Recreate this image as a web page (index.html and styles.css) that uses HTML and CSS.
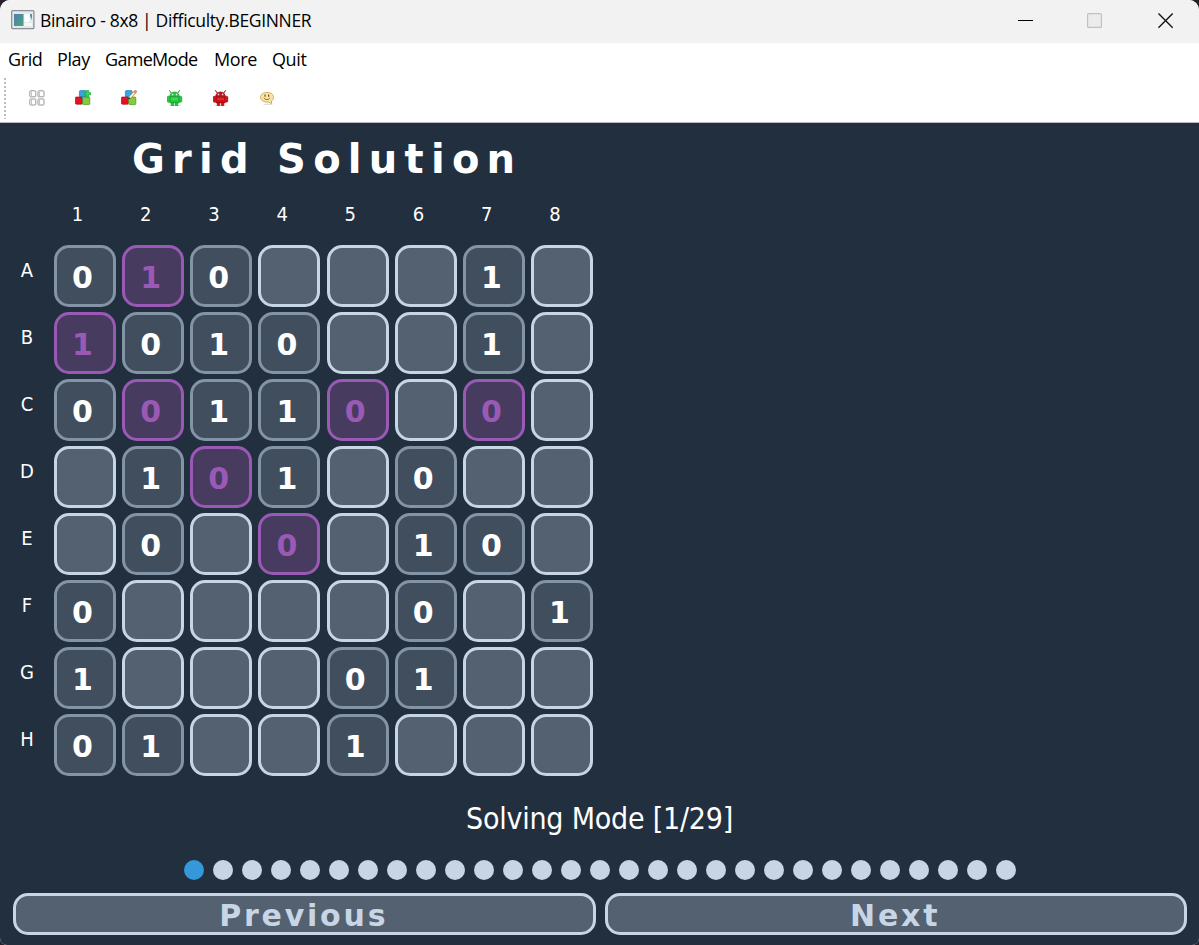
FILE: index.html
```
<!DOCTYPE html>
<html lang="en">
<head>
<meta charset="utf-8">
<title>Binairo</title>
<link rel="stylesheet" href="styles.css">
</head>
<body>
<div class="window">
<header class="titlebar">
<svg class="app-icon" width="24" height="20" viewBox="0 0 24 20"><defs><linearGradient id="scr" x2="1" y2="1"><stop stop-color="#4c7fae"/><stop offset="1" stop-color="#4ba67a"/></linearGradient></defs><rect x=".7" y=".7" width="22.2" height="18" rx="1" fill="#e6e9ec" stroke="#8c9096" stroke-width="1.3"/><rect x="3" y="4" width="9.5" height="12" fill="url(#scr)"/><path d="M13.500 4h5v8h-5z" fill="#fff"/><path d="M19 4h2v6l-2-4z" fill="#4e91aa"/><path d="M13.500 13h7.500v3h-7.500z" fill="#f6f7f8"/></svg>
<span class="caption">Binairo - 8x8 | Difficulty.BEGINNER</span>
<div class="controls">
<svg width="16" height="16" viewBox="0 0 16 16"><path d="M0 7.500h15" stroke="#000"/></svg>
<svg width="16" height="16" viewBox="0 0 16 16"><rect x=".6" y=".6" width="13.8" height="13.8" rx="1" fill="#ececec" stroke="#c0c0c0" stroke-width="1.2"/></svg>
<svg width="16" height="16" viewBox="0 0 16 16"><path d="M.5.5l14.2 14.2M14.7.5L.5 14.7" stroke="#16161c" stroke-width="1.4"/></svg>
</div>
</header>
<nav class="menu"><span class="m1">Grid</span><span class="m2">Play</span><span class="m3">GameMode</span><span class="m4">More</span><span class="m5">Quit</span></nav>
<div class="toolbar">
<svg class="grip" width="2" height="42" viewBox="0 0 2 42"><path d="M1 1v41" stroke="#bdbdbd" stroke-width="2" stroke-dasharray="2 2"/></svg>
<svg width="16" height="16" viewBox="0 0 16 16"><g fill="#fff" stroke="#999"><rect x=".8" y=".8" width="6" height="6" rx=".8"/><rect x="9" y=".8" width="6" height="6" rx=".8"/><rect x=".8" y="9" width="6" height="6" rx=".8"/><rect x="9" y="9" width="6" height="6" rx=".8"/></g><path d="M2.500 1.500v5M10.500 1.500v5M2.500 9.500v5M10.500 9.500v5" stroke="#c4c4c4"/></svg>
<svg width="16" height="16" viewBox="0 0 16 16"><rect x="4.400" y=".6" width="6.800" height="6.400" rx="1" fill="#35a5e6" stroke="#247db5" stroke-width=".7"/><rect x=".4" y="7" width="7" height="7.200" rx="1" fill="#e31224" stroke="#a80d1b" stroke-width=".7"/><rect x="7.600" y="7" width="7.200" height="7.600" rx="1" fill="#82cb3c" stroke="#4e8b20" stroke-width=".7"/><path d="M11.700.5h2v2.200h2.200v2h-2.200V6.900h-2V4.700H9.500v-2h2.200z" fill="#35e05a" stroke="#14a83a" stroke-width=".7"/></svg>
<svg width="16" height="16" viewBox="0 0 16 16"><rect x="4.400" y=".6" width="6.800" height="6.400" rx="1" fill="#35a5e6" stroke="#247db5" stroke-width=".7"/><rect x=".4" y="7" width="7" height="7.200" rx="1" fill="#e31224" stroke="#a80d1b" stroke-width=".7"/><rect x="7.600" y="7" width="7.200" height="7.600" rx="1" fill="#82cb3c" stroke="#4e8b20" stroke-width=".7"/><path d="M8.500 8L14.500 1.500" stroke="#b58a3c" stroke-width="2.800"/><path d="M8.800 7.700L13.600 2.400" stroke="#fff0b8" stroke-width="1.800"/><path d="M13.300 2.800L15.400.4" stroke="#e8827c" stroke-width="2.600"/><path d="M7.300 9.400l.5-2.200 1.700 1.400z" fill="#222"/></svg>
<svg width="16" height="16" viewBox="0 0 16 16"><ellipse cx="7.500" cy="15.200" rx="6" ry=".8" fill="#ccc"/><g stroke="#129428" stroke-width=".6" fill="#25c942"><path d="M2.700 6.600C2.700.4 12.300.4 12.300 6.600z"/><path d="M2.800 6.600h9.400v6.300H2.800z"/><rect x=".2" y="6.200" width="2.500" height="6" rx="1.200"/><rect x="12.300" y="6.200" width="2.500" height="6" rx="1.200"/><path d="M4.300 12.700h2.300v3H4.300zM8.400 12.700h2.300v3H8.400z"/></g><path d="M4.300 3L2.300.3M10.700 3L12.700.3" stroke="#129428"/><path d="M4.800 4.500h1.400M8.900 4.500h1.400" stroke="#eaffea" stroke-width="1.300"/><path d="M4 9h7" stroke="#62e078"/></svg>
<svg width="16" height="16" viewBox="0 0 16 16"><ellipse cx="7.500" cy="15.200" rx="6" ry=".8" fill="#ccc"/><g stroke="#870a10" stroke-width=".6" fill="#d50f18"><path d="M2.700 6.600C2.700.4 12.300.4 12.300 6.600z"/><path d="M2.800 6.600h9.400v6.300H2.800z"/><rect x=".2" y="6.200" width="2.500" height="6" rx="1.200"/><rect x="12.300" y="6.200" width="2.500" height="6" rx="1.200"/><path d="M4.300 12.700h2.300v3H4.300zM8.400 12.700h2.300v3H8.400z"/></g><path d="M4.300 3L2.300.3M10.700 3L12.700.3" stroke="#700b10"/><path d="M4.800 4.500h1.400M8.900 4.500h1.400" stroke="#ffe0e0" stroke-width="1.300"/><path d="M4 9h7" stroke="#ee3e40"/></svg>
<svg width="16" height="16" viewBox="0 0 16 16"><ellipse cx="9" cy="14.300" rx="5" ry=".8" fill="#ddd"/><path d="M8 2.400c3.800 0 6.500 2 6.500 4.900 0 1.800-.9 3-2.200 3.800l.4 2.500-3-1.600C5 12.500 1.500 10.400 1.500 7.300 1.500 4.400 4.200 2.400 8 2.400z" fill="#f8e5a4" stroke="#c9a359" stroke-width=".9"/><path d="M6 4.500v2.200M9.600 4.500v2.200" stroke="#735421" stroke-width="1.200"/><path d="M4.800 7.900c1.500 2.200 4.800 2.200 6.300 0" fill="none" stroke="#8c6829"/></svg>
</div>
<main class="game">
<h1 class="title">Grid Solution</h1>
<div class="columns"><span>1</span><span>2</span><span>3</span><span>4</span><span>5</span><span>6</span><span>7</span><span>8</span></div>
<div class="board">
<div class="rows"><span>A</span><span>B</span><span>C</span><span>D</span><span>E</span><span>F</span><span>G</span><span>H</span></div>
<div class="cells">
<i class="given">0</i><i class="solved">1</i><i class="given">0</i><i></i><i></i><i></i><i class="given">1</i><i></i>
<i class="solved">1</i><i class="given">0</i><i class="given">1</i><i class="given">0</i><i></i><i></i><i class="given">1</i><i></i>
<i class="given">0</i><i class="solved">0</i><i class="given">1</i><i class="given">1</i><i class="solved">0</i><i></i><i class="solved">0</i><i></i>
<i></i><i class="given">1</i><i class="solved">0</i><i class="given">1</i><i></i><i class="given">0</i><i></i><i></i>
<i></i><i class="given">0</i><i></i><i class="solved">0</i><i></i><i class="given">1</i><i class="given">0</i><i></i>
<i class="given">0</i><i></i><i></i><i></i><i></i><i class="given">0</i><i></i><i class="given">1</i>
<i class="given">1</i><i></i><i></i><i></i><i class="given">0</i><i class="given">1</i><i></i><i></i>
<i class="given">0</i><i class="given">1</i><i></i><i></i><i class="given">1</i><i></i><i></i><i></i>
</div>
</div>
<p class="mode">Solving Mode [1/29]</p>
<div class="dots"><b class="current"></b><b></b><b></b><b></b><b></b><b></b><b></b><b></b><b></b><b></b><b></b><b></b><b></b><b></b><b></b><b></b><b></b><b></b><b></b><b></b><b></b><b></b><b></b><b></b><b></b><b></b><b></b><b></b><b></b></div>
<div class="buttons"><button class="prev">Previous</button><button class="next">Next</button></div>
</main>
</div>
</body>
</html>
```
FILE: styles.css
```
* { box-sizing: border-box; }
body { margin: 0; background: #262029; overflow: hidden; }
.window { width: 1199px; height: 945px; display: flex; flex-direction: column; border-radius: 10px 10px 7px 7px; overflow: hidden; background: #fff; color: #000; font-family: "Open Sans", "Noto Sans", sans-serif; }
.titlebar { height: 43px; flex: none; background: #f2f2f2; display: flex; align-items: center; padding: 0 25px 3px 11px; }
.caption { margin-left: 5px; font-size: 17.5px; letter-spacing: -.33px; white-space: nowrap; }
.controls { margin-left: auto; width: 156px; padding-top: 2px; display: grid; grid-template-columns: 69px 71px 16px; }
.controls svg { display: block; }
.menu { height: 34px; flex: none; display: flex; padding-left: 8px; font-size: 18px; line-height: 33px; letter-spacing: -.4px; white-space: nowrap; }
.m1 { width: 49px; }
.m2 { width: 48px; }
.m3 { width: 109px; letter-spacing: -.7px; }
.m4 { width: 58px; }
.toolbar { height: 46px; flex: none; display: flex; align-items: center; gap: 30px; padding: 0 0 3px 4px; border-bottom: 1px solid #b5b9bb; }
.grip { margin-right: -7px; }
.game { flex: 1; background: #222f3f; color: #fff; font-family: "DejaVu Sans Condensed", "DejaVu Sans", sans-serif; font-stretch: condensed; }
.title { margin: 0; padding: 12px 0 0 132px; height: 72px; font-family: "DejaVu Sans", sans-serif; font-stretch: normal; font-size: 40px; line-height: 48px; font-weight: bold; letter-spacing: 7.25px; white-space: nowrap; }
.columns { display: grid; grid-template-columns: repeat(8, 68.200px); padding-left: 43.5px; height: 50px; font-size: 20px; line-height: 38px; text-align: center; }
.board { display: flex; }
.rows { width: 54px; display: grid; grid-auto-rows: 67px; font-size: 20px; line-height: 50px; text-align: center; }
.cells { width: 539px; display: grid; grid-template-columns: repeat(8, 62px); grid-auto-rows: 62px; justify-content: space-between; row-gap: 5px; }
.cells i { border: 3px solid #c8d5e5; border-radius: 15px; background: #536170; padding: 1px 5px 0 0; font-family: "DejaVu Sans", sans-serif; font-stretch: normal; font-style: normal; font-weight: bold; font-size: 30px; line-height: 58px; text-align: center; }
.cells .given { border-color: #8294a6; background: #404e5e; }
.cells .solved { border-color: #9b59b6; background: #473c60; color: #9b59b6; }
.mode { margin: 0; padding-top: 20px; height: 79px; font-size: 30px; line-height: 36px; text-align: center; letter-spacing: -.22px; }
.dots { display: flex; gap: 9px; padding-left: 184px; height: 33px; }
.dots b { width: 20px; height: 20px; border-radius: 50%; background: #c8d5e5; }
.dots .current { background: #3498db; }
.buttons { display: flex; gap: 9px; padding: 0 12px 0 13px; }
.buttons button { flex: 1; height: 42px; padding: 4px 1px 0 0; border: 3px solid #c8d5e5; border-radius: 15px; background: #536170; color: #c8d5e5; font-family: "DejaVu Sans", sans-serif; font-stretch: normal; font-size: 30px; line-height: 32px; font-weight: bold; letter-spacing: 2.8px; }
```
